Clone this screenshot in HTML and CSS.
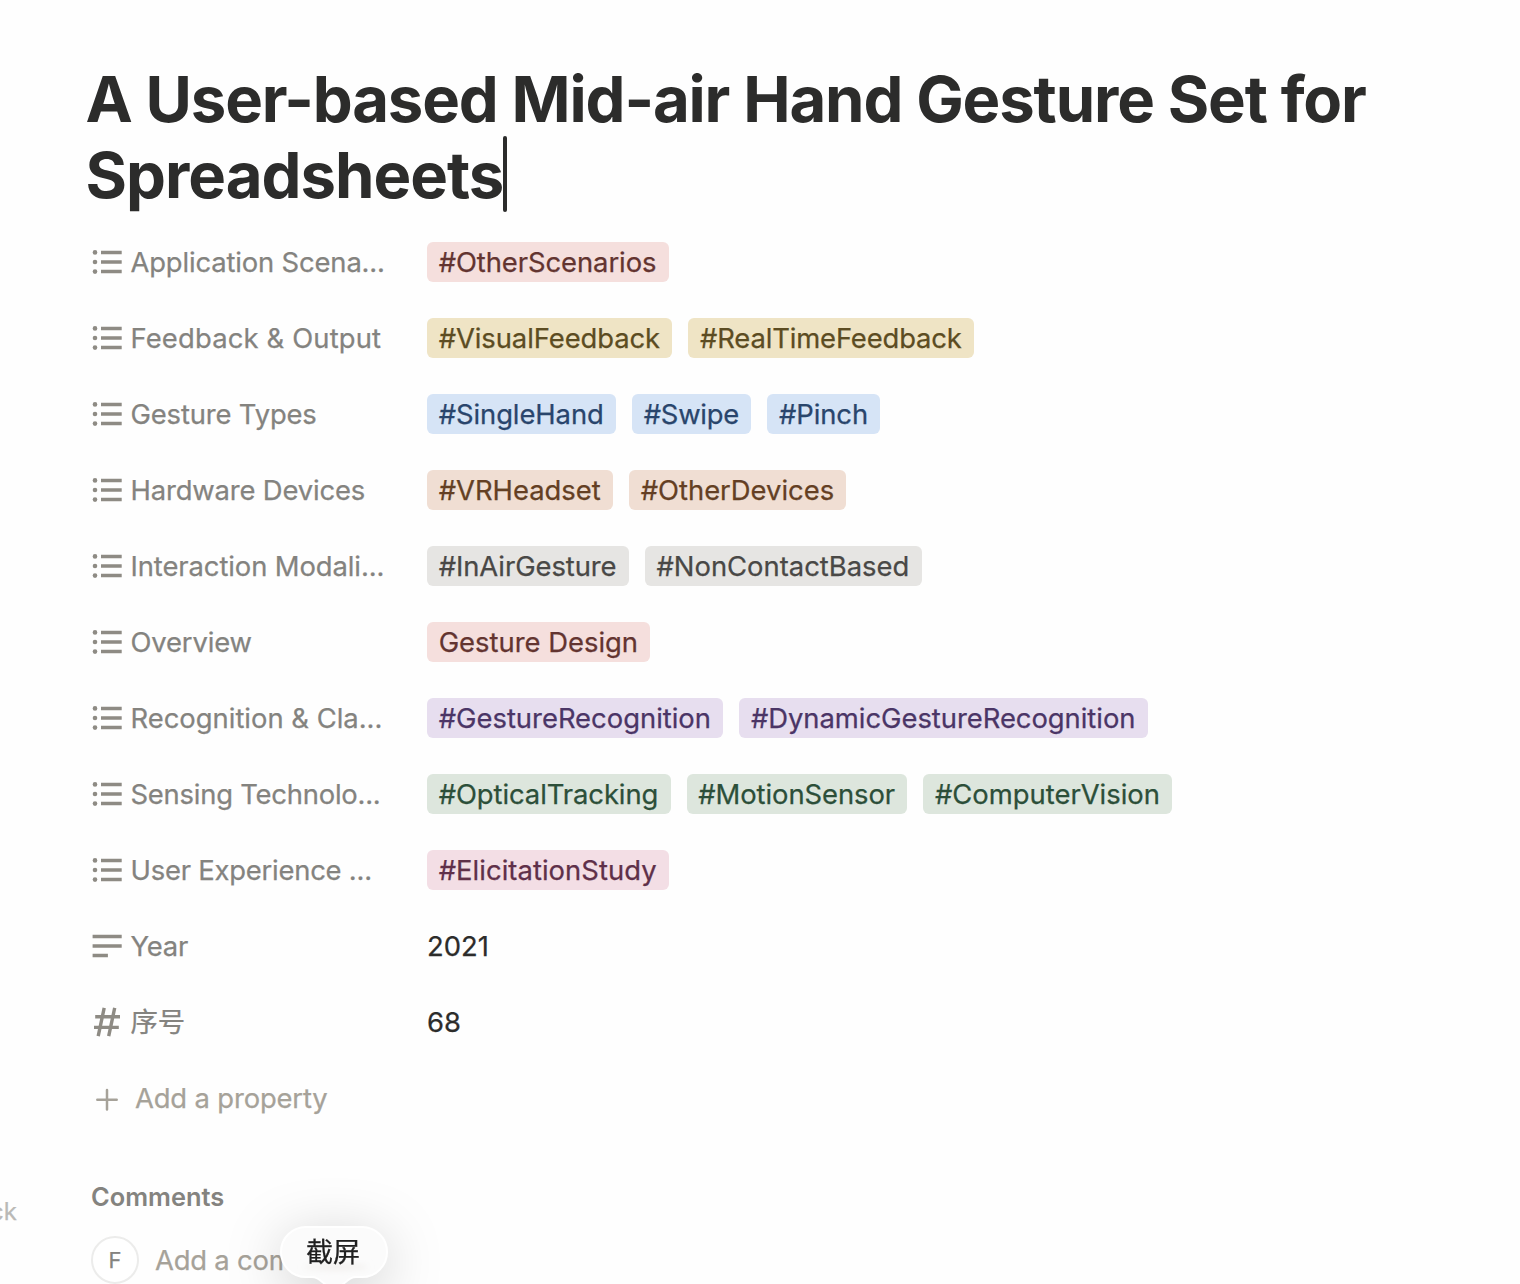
FILE: index.html
```html
<!DOCTYPE html>
<html lang="en">
<head>
<meta charset="utf-8">
<title>A User-based Mid-air Hand Gesture Set for Spreadsheets</title>
<link rel="stylesheet" href="styles.css">
</head>
<body>
<svg class="sprite" aria-hidden="true">
  <symbol id="list" viewBox="0 0 32 32"><g fill="currentColor"><circle cx="4" cy="6.4" r="2.3"/><circle cx="4" cy="16" r="2.3"/><circle cx="4" cy="25.6" r="2.3"/></g><path d="M10 6.4h20.7M10 16h20.7M10 25.6h20.7" stroke="currentColor" stroke-width="3.5"/></symbol>
  <symbol id="lines" viewBox="0 0 32 32"><path d="M1.6 6.4h29.1M1.6 16h29.1M1.6 25.6h15.3" stroke="currentColor" stroke-width="3.5"/></symbol>
  <symbol id="number" viewBox="0 0 32 32"><path d="M4.2 10.7h24.8M3 21.4h24.8M13.2 1.9L7.2 30.2M23.7 1.9l-6 28.3" stroke="currentColor" stroke-width="3.4" fill="none"/></symbol>
  <symbol id="plus" viewBox="0 0 32 32"><path d="M16 8v19.4M6.3 17.7h19.4" stroke="currentColor" stroke-width="2.5" stroke-linecap="round"/></symbol>
</svg>
<main class="page">
  <h1 class="title"><span class="line-one">A User-based Mid-air Hand Gesture Set for</span> <br><span class="line-two">Spreadsheets</span><span class="caret"></span></h1>
  <section class="properties">
    <div class="row"><div class="name"><svg class="icon"><use href="#list"/></svg><span>Application Scena...</span></div><div class="values"><span class="tag red snug">#OtherScenarios</span></div></div>
    <div class="row"><div class="name loose"><svg class="icon"><use href="#list"/></svg><span>Feedback &amp; Output</span></div><div class="values"><span class="tag yellow snug">#VisualFeedback</span><span class="tag yellow snugger">#RealTimeFeedback</span></div></div>
    <div class="row"><div class="name"><svg class="icon"><use href="#list"/></svg><span>Gesture Types</span></div><div class="values"><span class="tag blue snug">#SingleHand</span><span class="tag blue snuggest">#Swipe</span><span class="tag blue snug">#Pinch</span></div></div>
    <div class="row"><div class="name"><svg class="icon"><use href="#list"/></svg><span>Hardware Devices</span></div><div class="values"><span class="tag orange">#VRHeadset</span><span class="tag orange">#OtherDevices</span></div></div>
    <div class="row"><div class="name snug"><svg class="icon"><use href="#list"/></svg><span>Interaction Modali...</span></div><div class="values"><span class="tag gray snug">#InAirGesture</span><span class="tag gray">#NonContactBased</span></div></div>
    <div class="row"><div class="name"><svg class="icon"><use href="#list"/></svg><span>Overview</span></div><div class="values"><span class="tag red">Gesture Design</span></div></div>
    <div class="row"><div class="name even"><svg class="icon"><use href="#list"/></svg><span>Recognition &amp; Cla...</span></div><div class="values"><span class="tag purple">#GestureRecognition</span><span class="tag purple slight">#DynamicGestureRecognition</span></div></div>
    <div class="row"><div class="name tight"><svg class="icon"><use href="#list"/></svg><span>Sensing Technolo...</span></div><div class="values"><span class="tag green snug">#OpticalTracking</span><span class="tag green snug">#MotionSensor</span><span class="tag green">#ComputerVision</span></div></div>
    <div class="row"><div class="name tight"><svg class="icon"><use href="#list"/></svg><span>User Experience ...</span></div><div class="values"><span class="tag pink wide">#ElicitationStudy</span></div></div>
    <div class="row"><div class="name tight"><svg class="icon"><use href="#lines"/></svg><span>Year</span></div><div class="values">2021</div></div>
    <div class="row"><div class="name"><svg class="icon"><use href="#number"/></svg><span>序号</span></div><div class="values">68</div></div>
    <div class="row add"><svg class="icon"><use href="#plus"/></svg><span>Add a property</span></div>
  </section>
  <section class="comments">
    <h2 class="heading">Comments</h2>
    <div class="composer"><span class="avatar">F</span><span>Add a comment...</span></div>
  </section>
  <span class="edge">ck</span>
  <div class="tooltip"><svg class="bubble" viewBox="0 0 116 66"><defs><filter id="soft" x="-20%" y="-100%" width="140%" height="300%"><feGaussianBlur stdDeviation="3"/></filter></defs><path d="M30 5H86A25 25 0 0 1 86 55H80C70 55 68 66 58 66S46 55 36 55H30A25 25 0 0 1 30 5Z" fill="#fbfbfb" stroke="#fff" stroke-width="2"/><ellipse cx="60" cy="45" rx="32" ry="3" fill="#f1efed" filter="url(#soft)"/></svg><span class="tip-text">截屏</span></div>
</main>
</body>
</html>
```
FILE: styles.css
```css
* { box-sizing: border-box; }
body { margin: 0; background: #fefefe; color: #2c2c2b; font-family: Inter, "Noto Sans CJK SC", sans-serif; font-size: 27.4px; line-height: 36px; -webkit-text-stroke: 0.25px currentColor; }
.sprite { display: none; }
.page { position: relative; height: 1284px; overflow: hidden; padding: 61px 0 0 85.5px; }
.title { margin: 0 0 2px; font-size: 63.4px; line-height: 76px; font-weight: 700; white-space: nowrap; height: 161px; -webkit-text-stroke: 0; }
.line-one { letter-spacing: -1.13px; }
.line-two { letter-spacing: -0.98px; }
.caret { display: inline-block; width: 4px; height: 76px; margin: -1px 0 0 0; border-radius: 2px; background: #2c2c2b; vertical-align: top; }
.properties { padding-left: .5px; }
.row { display: flex; align-items: center; height: 76px; }
.name { display: flex; align-items: center; width: 341px; color: #84837f; letter-spacing: -0.15px; }
.name.loose { letter-spacing: 0.16px; }
.name.even { letter-spacing: 0; }
.name.snug { letter-spacing: -0.09px; }
.name.tight { letter-spacing: -0.22px; }
.icon { width: 32px; height: 32px; flex: none; margin: 0 7.5px 0 5px; color: #8e8b84; }
.values { display: flex; gap: 16px; }
.tag { height: 40px; line-height: 40px; padding: 0 12.3px 0 11.7px; border-radius: 6px; white-space: nowrap; }
.slight { letter-spacing: -0.03px; }
.snug { letter-spacing: -0.07px; }
.snugger { letter-spacing: -0.14px; }
.snuggest { letter-spacing: -0.25px; }
.wide { letter-spacing: 0.05px; }
.red { background: #f5dfdd; color: #633430; }
.yellow { background: #efe4c5; color: #5c4c22; }
.blue { background: #d6e4f6; color: #29456c; }
.orange { background: #f0ded3; color: #643f23; }
.gray { background: #e6e5e3; color: #494846; }
.purple { background: #e7deef; color: #4b3566; }
.green { background: #dde6dd; color: #2c4f39; }
.pink { background: #f3dee5; color: #5f3049; }
.add { color: #a6a299; letter-spacing: -0.15px; }
.add .icon { color: #a6a299; margin-right: 12px; }
.comments { padding: 43px 0 0 5.5px; }
.heading { margin: 0; font-size: 25.4px; line-height: 36px; font-weight: 600; color: #84837f; -webkit-text-stroke: 0; }
.composer { display: flex; align-items: center; gap: 16px; margin-top: 21px; color: #a6a299; letter-spacing: -0.2px; }
.avatar { width: 48px; height: 48px; border: 2px solid #ececeb; border-radius: 50%; text-align: center; line-height: 44px; font-size: 22px; color: #84837f; background: #fff; }
.edge { position: absolute; left: -10px; top: 1194px; font-size: 24px; color: #bab9b6; }
.tooltip { position: absolute; left: 276px; top: 1222px; width: 116px; height: 66px; filter: drop-shadow(0 10px 28px rgba(0,0,0,.19)); }
.bubble { display: block; width: 116px; height: 66px; }
.tip-text { position: absolute; left: 30px; top: 13px; font-size: 27px; color: #202020; }
```
